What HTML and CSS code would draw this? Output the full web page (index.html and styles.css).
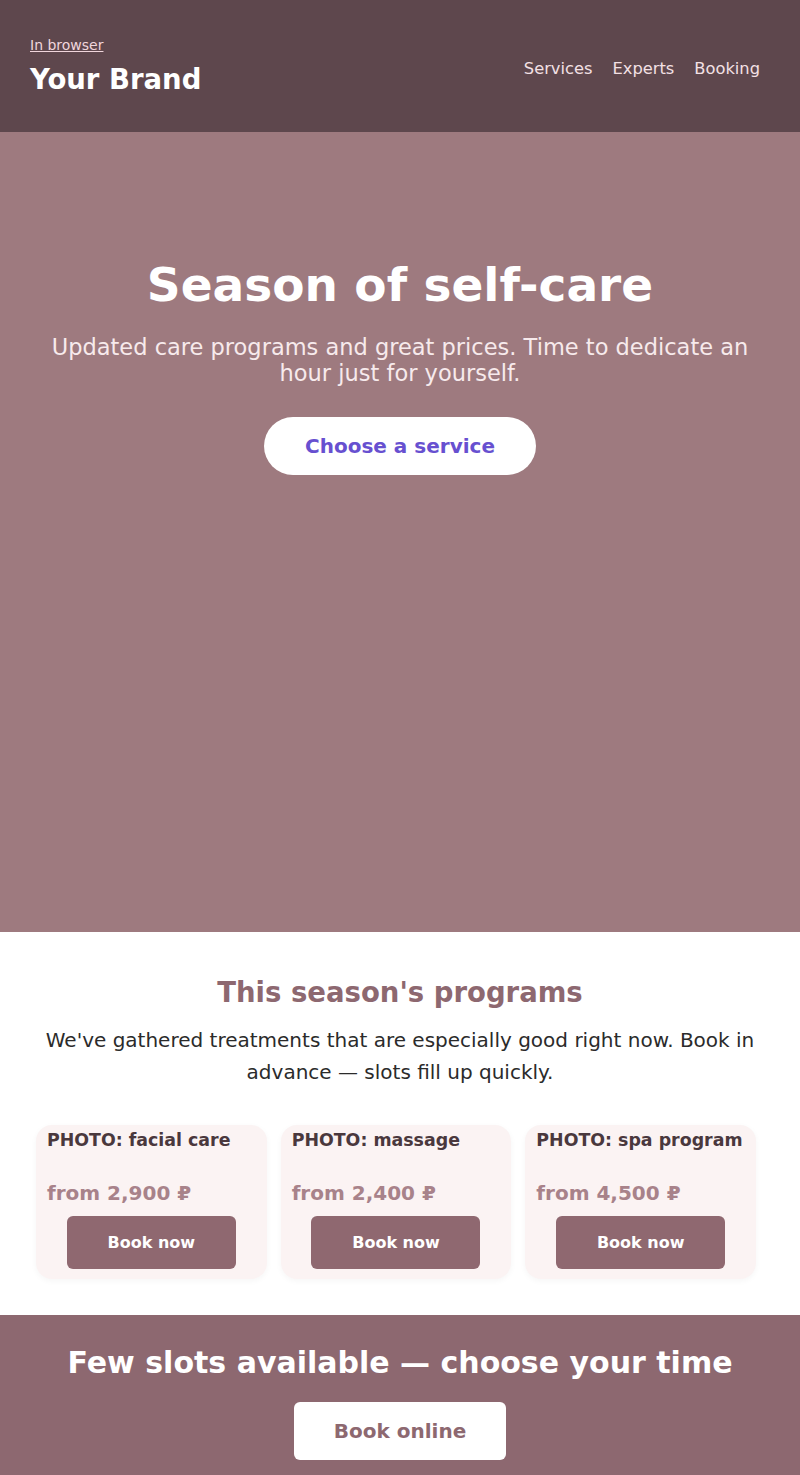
FILE: index.html
```html
<!DOCTYPE html>
<html lang="en">
<head>
    <meta charset="UTF-8">
    <meta name="viewport" content="width=device-width, initial-scale=1.0">
    <title>Your Brand</title>

    <link rel="stylesheet" href="styles.css">
</head>
<body>
    <header class="header">
        <div class="brand">
            <a href="#" class="browser-link">In browser</a>
            <div class="logo">Your Brand</div>
        </div>
        <nav class="nav">
            <a href="#">Services</a>
            <a href="#">Experts</a>
            <a href="#">Booking</a>
        </nav>
    </header>

    <section class="hero">
        <h1>Season of self-care</h1>
        <p>Updated care programs and great prices. Time to dedicate an hour just for yourself.</p>
        <a href="#" class="hero-btn">Choose a service</a>
    </section>

    <section class="programs">
        <h2>This season's programs</h2>
        <p class="intro">We've gathered treatments that are especially good right now. Book in advance — slots fill up quickly.</p>

        <div class="cards">
            <div class="card">
                <div class="card-photo">PHOTO: facial care</div>
                <div class="price">from 2,900 ₽</div>
                <a href="#" class="card-btn">Book now</a>
            </div>
            <div class="card">
                <div class="card-photo">PHOTO: massage</div>
                <div class="price">from 2,400 ₽</div>
                <a href="#" class="card-btn">Book now</a>
            </div>
            <div class="card">
                <div class="card-photo">PHOTO: spa program</div>
                <div class="price">from 4,500 ₽</div>
                <a href="#" class="card-btn">Book now</a>
            </div>
        </div>
    </section>

    <section class="cta">
        <h2>Few slots available — choose your time</h2>
        <a href="#" class="cta-btn">Book online</a>
    </section>
</body>
</html>
```

FILE: styles.css
```css
body {
    margin: 0;
    font-family: "DejaVu Sans", sans-serif;
    background-color: #ffffff;
}
a {
    text-decoration: none;
}
.header {
    background-color: #5e474d;
    display: flex;
    justify-content: space-between;
    align-items: center;
    height: 132px;
    padding: 0 40px 0 30px;
    box-sizing: border-box;
}
.brand {
    display: flex;
    flex-direction: column;
    gap: 10px;
}
.browser-link {
    color: #f0d6dc;
    font-size: 14px;
    text-decoration: underline;
}
.logo {
    color: #ffffff;
    font-size: 27.5px;
    font-weight: bold;
}
.nav {
    display: flex;
    gap: 20px;
    padding-top: 4px;
}
.nav a {
    color: #f3e0e4;
    font-size: 16.3px;
}
.hero {
    background-color: #9e7a7f;
    height: 800px;
    box-sizing: border-box;
    padding: 125px 40px 0;
    text-align: center;
    color: #ffffff;
}
.hero h1 {
    font-size: 47px;
    margin: 0 0 21px;
    line-height: 1.2;
}
.hero p {
    font-size: 22.5px;
    line-height: 26px;
    color: #f7eaec;
    margin: 0 0 31px;
}
.hero-btn {
    display: inline-block;
    background-color: #ffffff;
    color: #6750d0;
    font-size: 20px;
    font-weight: bold;
    line-height: 24px;
    padding: 17px 41px;
    border-radius: 30px;
}
.programs {
    padding: 43px 0 36px;
    text-align: center;
}
.programs h2 {
    color: #8d6870;
    font-size: 27.5px;
    margin: 0 0 13px;
    line-height: 1.3;
}
.intro {
    color: #2b2b2b;
    font-size: 20px;
    line-height: 32px;
    margin: 0 40px 37px;
}
.cards {
    display: grid;
    grid-template-columns: repeat(3, 1fr);
    gap: 14px;
    padding: 0 44px 0 36px;
}
.card {
    background-color: #fbf3f3;
    border-radius: 16px;
    padding: 3px 11px 10px;
    text-align: left;
    box-shadow: 0 2px 6px rgba(0, 0, 0, 0.04);
}
.card-photo {
    color: #4a383d;
    font-size: 17.4px;
    font-weight: bold;
    line-height: 24px;
    height: 51px;
}
.price {
    color: #a8828a;
    font-size: 20px;
    font-weight: bold;
    line-height: 28px;
    margin-bottom: 9px;
}
.card-btn {
    display: block;
    width: 169px;
    margin: 0 auto;
    background-color: #8f6870;
    color: #ffffff;
    font-size: 16px;
    font-weight: bold;
    text-align: center;
    line-height: 21px;
    padding: 16px 0;
    border-radius: 6px;
}
.cta {
    background-color: #8d6870;
    padding: 28px 20px 40px;
    text-align: center;
}
.cta h2 {
    color: #ffffff;
    font-size: 30px;
    margin: 0 0 20px;
    line-height: 1.3;
}
.cta-btn {
    display: inline-block;
    background-color: #ffffff;
    color: #8d6870;
    font-size: 20px;
    font-weight: bold;
    padding: 17px 40px;
    border-radius: 6px;
}
```
